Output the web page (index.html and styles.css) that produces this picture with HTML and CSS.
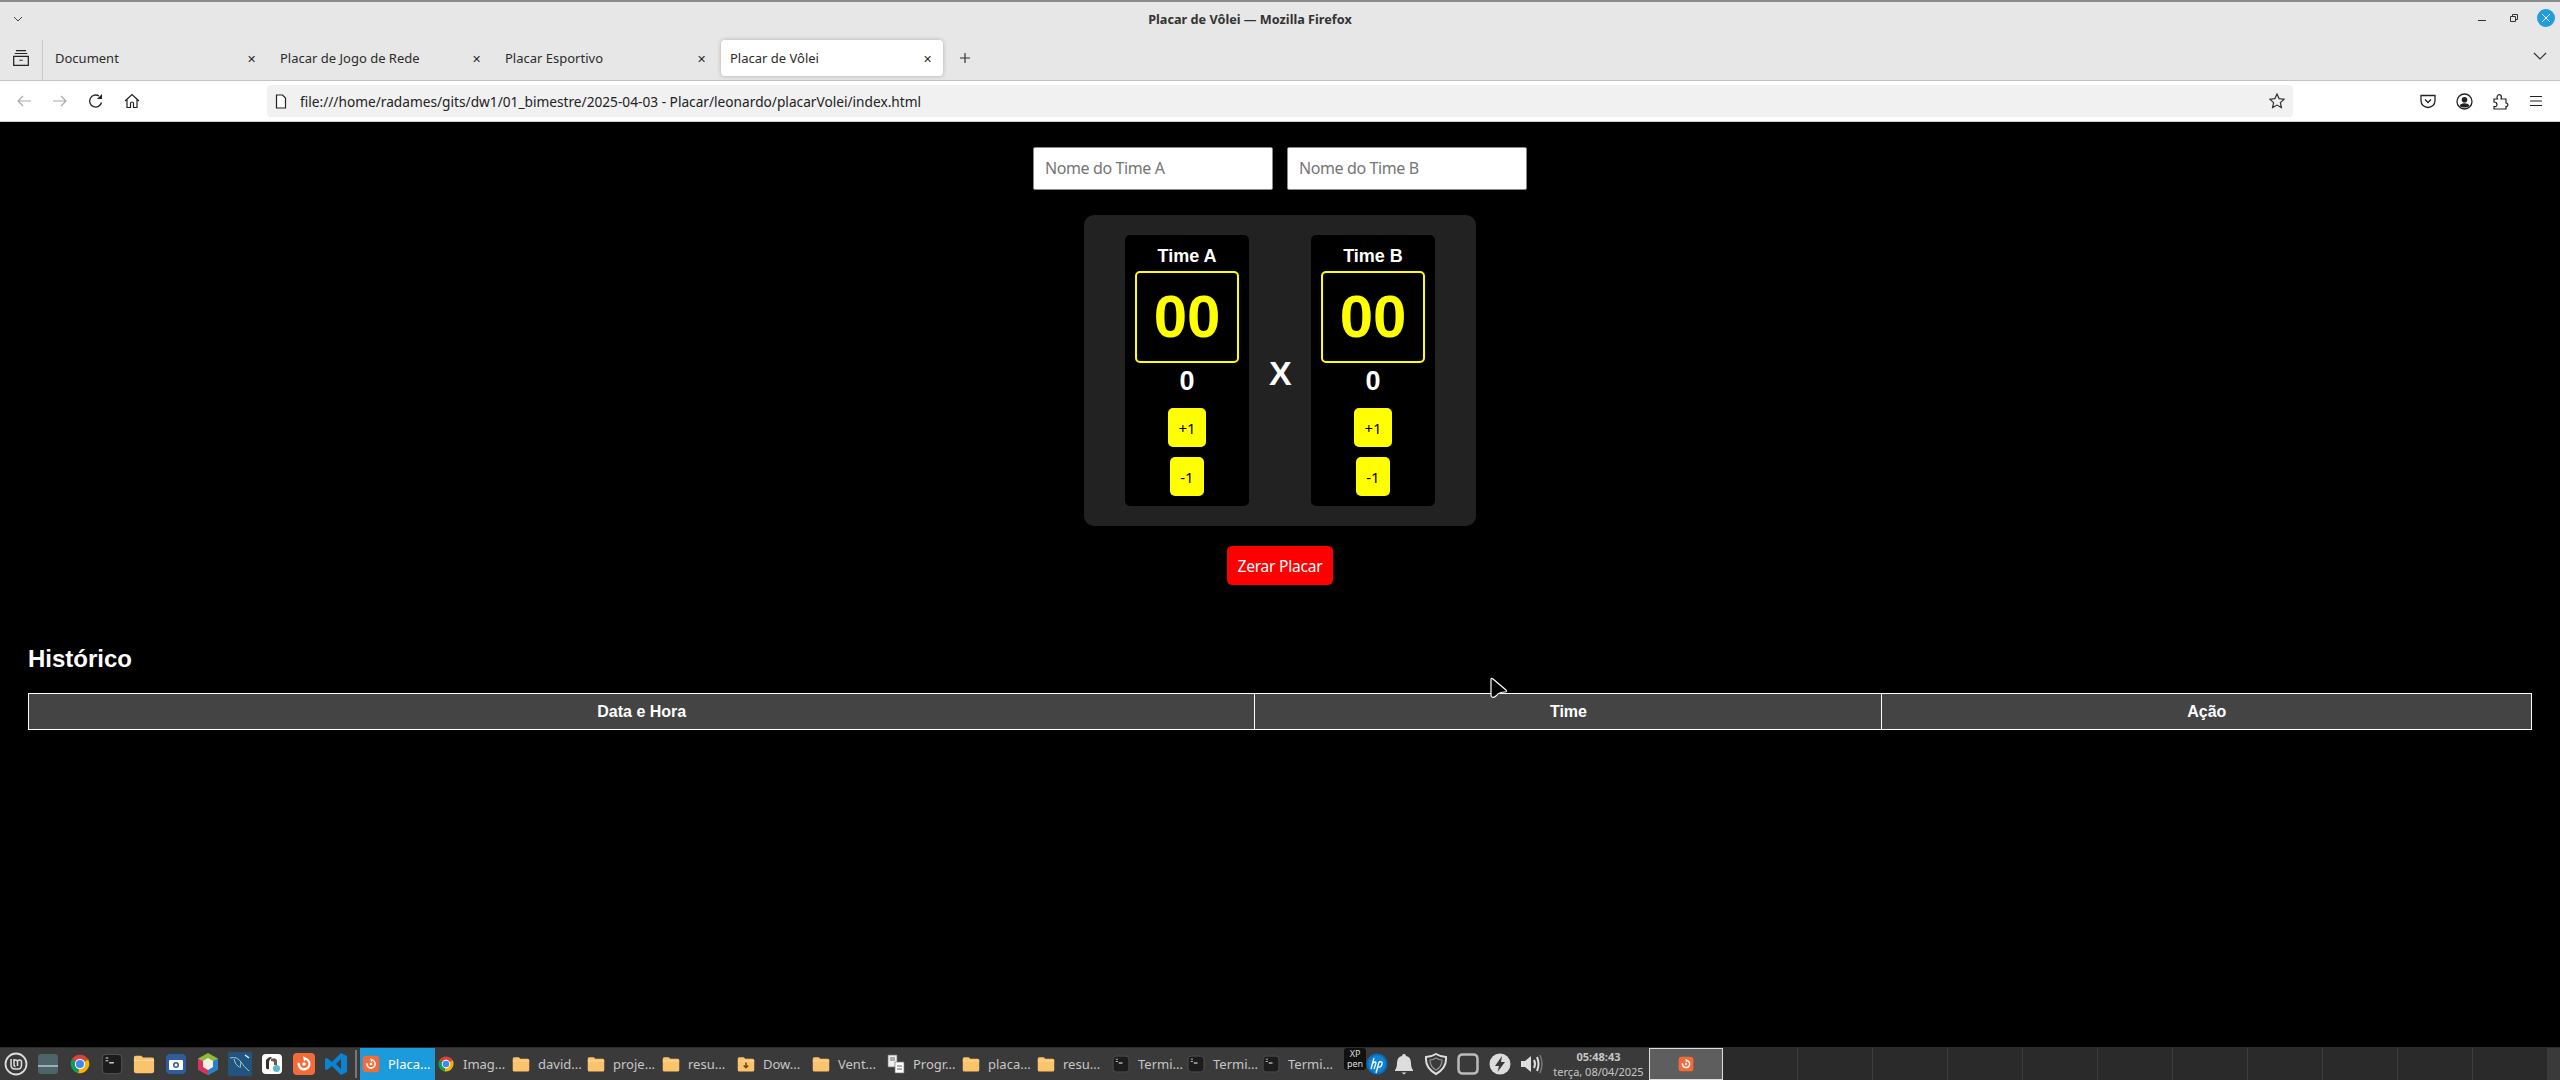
FILE: index.html
```html
<!DOCTYPE html>
<html lang="pt-BR">
<head>
    <meta charset="utf-8">
    <title>Placar de Vôlei</title>
    <link rel="stylesheet" href="styles.css">
</head>
<body>
<svg class="defs" width="0" height="0">
    <symbol id="i-folder" viewBox="0 0 24 24">
        <path d="M1 5q0-2 2-2h6l2 2h10q2 0 2 2v13q0 2-2 2H3q-2 0-2-2z" fill="#fbc36c"/>
        <path d="M1 8h22" stroke="#fde0ae" stroke-width="1"/>
    </symbol>
    <symbol id="i-terminal" viewBox="0 0 24 24">
        <rect x="1.500" y="1.500" width="21" height="21" rx="4" fill="#1c1c1c" stroke="#555"/>
        <path d="M5 5h3v1H5zm0 3h3v1H5z" fill="#ddd"/>
        <path d="M9 10h5v1.400H9z" fill="#eee"/>
    </symbol>
    <symbol id="i-chrome" viewBox="0 0 24 24">
        <path d="M12 12 3 7A10.500 10.500 0 0 1 21 7z" fill="#db4437"/>
        <path d="M12 12 3 7a10.500 10.500 0 0 0 7 15z" fill="#0f9d58"/>
        <path d="M12 12l9-5a10.500 10.500 0 0 1-11 15z" fill="#f4b400"/>
        <circle cx="12" cy="12" r="5.600" fill="#fff"/>
        <circle cx="12" cy="12" r="4.400" fill="#4285f4"/>
    </symbol>
    <symbol id="i-ffdev" viewBox="0 0 24 24">
        <rect x="1" y="1" width="22" height="22" rx="4" fill="#f26b38"/>
        <path d="M12 5.500a6.500 6.500 0 1 1-6.300 5l2.300 1a4.200 4.200 0 1 0 4-3.800z" fill="#fff"/>
        <path d="M11 4l4 2.500-3 3z" fill="#fff"/>
        <circle cx="12" cy="12" r="1.800" fill="#fff"/>
    </symbol>
    <symbol id="i-code" viewBox="0 0 24 24">
        <path d="M17 1l6 3v16l-6 3-9-9-5 4-2-1V7l2-1 5 4zm0 6-5 5 5 5z" fill="#0a84d0"/>
    </symbol>
</svg>

<div class="screen">
    <header class="titlebar">
        <svg class="chevron-left" width="10" height="6" viewBox="0 0 10 6"><path d="M1 1l4 4 4-4" fill="none" stroke="#444"/></svg>
        <span class="window-title">Placar de Vôlei — Mozilla Firefox</span>
        <div class="window-buttons">
            <svg width="12" height="12" viewBox="0 0 12 12"><path d="M2 8.500h8" stroke="#333"/></svg>
            <svg width="12" height="12" viewBox="0 0 12 12"><path d="M2.500 4.500h5v5h-5zM4.500 4.500v-2h5v5h-2" fill="none" stroke="#333"/></svg>
            <span class="close-circle"><svg width="10" height="10" viewBox="0 0 10 10"><path d="M1 1l8 8M9 1l-8 8" stroke="#fff"/></svg></span>
        </div>
    </header>

    <nav class="tabstrip">
        <div class="tab-side">
            <svg width="18" height="18" viewBox="0 0 16 16"><path d="M3.500 1.500h9M2.500 4h11M1.500 6.500h13v8h-13zM6.500 10h3" fill="none" stroke="#222" stroke-width="1.100"/></svg>
        </div>
        <div class="tab"><span class="tab-label">Document</span><span class="tab-x">✕</span></div>
        <div class="tab"><span class="tab-label">Placar de Jogo de Rede</span><span class="tab-x">✕</span></div>
        <div class="tab"><span class="tab-label">Placar Esportivo</span><span class="tab-x">✕</span></div>
        <div class="tab tab-active"><span class="tab-label">Placar de Vôlei</span><span class="tab-x">✕</span></div>
        <svg class="tab-plus" width="12" height="12" viewBox="0 0 12 12"><path d="M6 1v10M1 6h10" stroke="#333" stroke-width="1.200"/></svg>
        <svg class="tab-list" width="14" height="8" viewBox="0 0 14 8"><path d="M1 1l6 6 6-6" fill="none" stroke="#333" stroke-width="1.200"/></svg>
    </nav>

    <div class="toolbar">
        <div class="nav-buttons">
            <svg width="16" height="16" viewBox="0 0 16 16"><path d="M15 8H2M7 3 2 8l5 5" fill="none" stroke="#aaa" stroke-width="1.200"/></svg>
            <svg width="16" height="16" viewBox="0 0 16 16"><path d="M1 8h13M9 3l5 5-5 5" fill="none" stroke="#aaa" stroke-width="1.200"/></svg>
            <svg width="16" height="16" viewBox="0 0 16 16"><path d="M13.500 9.500A6 6 0 1 1 11 3" fill="none" stroke="#222" stroke-width="1.300"/><path d="M14 1v5h-5z" fill="#222"/></svg>
            <svg width="16" height="16" viewBox="0 0 16 16"><path d="M1 8l7-6.500L15 8M3 6.500V14.500h3.500v-4a1.500 1.500 0 0 1 3 0v4H13V6.500" fill="none" stroke="#222" stroke-width="1.200"/></svg>
        </div>
        <div class="urlbar">
            <svg width="12" height="15" viewBox="0 0 12 15"><path d="M1.500 1h6l3 3v10h-9z" fill="#fff" stroke="#222" stroke-width="1.200"/></svg>
            <span class="url-text">file:///home/radames/gits/dw1/01_bimestre/2025-04-03 - Placar/leonardo/placarVolei/index.html</span>
            <svg class="url-star" width="16" height="16" viewBox="0 0 16 16"><path d="M8 1l2.100 4.600 5 .6-3.700 3.400 1 5L8 12.100l-4.400 2.500 1-5L.9 6.200l5-.6z" fill="none" stroke="#333" stroke-width="1.200"/></svg>
        </div>
        <div class="tool-icons">
            <svg width="16" height="16" viewBox="0 0 16 16"><path d="M1 2.500h14V8a7 6.500 0 0 1-14 0z" fill="none" stroke="#222" stroke-width="1.300"/><path d="M5 6.500l3 3 3-3" fill="none" stroke="#222" stroke-width="1.300"/></svg>
            <svg width="17" height="17" viewBox="0 0 17 17"><circle cx="8.500" cy="8.500" r="7.500" fill="none" stroke="#222" stroke-width="1.300"/><circle cx="8.500" cy="6.800" r="2.800" fill="#222"/><path d="M3.500 13q1-2.800 5-2.800t5 2.800q-5 3-10 0z" fill="#222"/></svg>
            <svg width="16" height="17" viewBox="0 0 16 17"><path d="M1 6h3.500q-1-1.500-.2-3Q5.500 1 7.500 2q1.500 1 .5 4H13v4q2 0 1.800 2.500Q14 14 13 13.500V16H1v-2.500q3 .5 3-2T1 9z" fill="none" stroke="#222" stroke-width="1.200"/></svg>
            <svg width="14" height="14" viewBox="0 0 14 14"><path d="M1 2.500h12M1 7h12M1 11.500h12" stroke="#222" stroke-width="1.200"/></svg>
        </div>
    </div>

    <main class="page">
        <div class="team-names">
            <input class="name-input" type="text" placeholder="Nome do Time A">
            <input class="name-input" type="text" placeholder="Nome do Time B">
        </div>

        <section class="board">
            <div class="team">
                <h2 class="team-title">Time A</h2>
                <div class="score">00</div>
                <div class="sets">0</div>
                <button class="btn btn-add">+1</button>
                <button class="btn btn-sub">-1</button>
            </div>
            <div class="versus">X</div>
            <div class="team">
                <h2 class="team-title">Time B</h2>
                <div class="score">00</div>
                <div class="sets">0</div>
                <button class="btn btn-add">+1</button>
                <button class="btn btn-sub">-1</button>
            </div>
        </section>

        <button class="btn-reset">Zerar Placar</button>

        <section class="history">
            <h2 class="history-title">Histórico</h2>
            <table class="history-table">
                <thead>
                    <tr>
                        <th>Data e Hora</th>
                        <th>Time</th>
                        <th>Ação</th>
                    </tr>
                </thead>
            </table>
        </section>

        <svg class="cursor" width="20" height="22" viewBox="0 0 20 22"><path d="M2 2.500q0-2 2-.5l13 11q1.500 2-1 2-6 0-8.500 3.500-2.500 2.500-4.500 1.500-1-.5-1-2z" fill="#000" stroke="#fff" stroke-width="1.200"/></svg>
    </main>

    <footer class="taskbar">
        <div class="launchers">
            <span class="launcher"><svg width="24" height="24" viewBox="0 0 24 24"><circle cx="12" cy="12" r="10.500" fill="none" stroke="#ddd" stroke-width="1.800"/><path d="M7 7v6q0 4 4 4h3q3.500 0 3.500-4V10q0-2-2-2t-2 2v4M10 7v6q0 1.500 1.500 1.500M13.500 10q0-2-2-2t-1.500 2" fill="none" stroke="#ddd" stroke-width="1.500"/></svg></span>
            <span class="launcher"><svg width="22" height="22" viewBox="0 0 22 22"><rect x="1" y="1" width="20" height="20" rx="3" fill="#4f6468"/><path d="M1 13h20" stroke="#dff" stroke-width="1"/></svg></span>
            <span class="launcher"><svg width="22" height="22"><use href="#i-chrome"/></svg></span>
            <span class="launcher"><svg width="22" height="22"><use href="#i-terminal"/></svg></span>
            <span class="launcher"><svg width="22" height="22"><use href="#i-folder"/></svg></span>
            <span class="launcher"><svg width="22" height="22" viewBox="0 0 22 22"><rect x="1" y="1" width="20" height="20" rx="4" fill="#2f5d9b"/><rect x="4" y="7" width="14" height="10" rx="1" fill="#fff"/><circle cx="11" cy="12" r="3" fill="#2f5d9b"/><circle cx="11" cy="12" r="1.500" fill="#fff"/></svg></span>
            <span class="launcher"><svg width="24" height="24" viewBox="0 0 24 24"><path d="M12 1l10 5.500v11L12 23 2 17.500v-11z" fill="#8dbb3c"/><path d="M22 6.500v11L12 23V12z" fill="#2a7fc9"/><path d="M2 6.500v11L12 23V12z" fill="#d9325e"/><path d="M12 6l5 3v6l-5 3-5-3V9z" fill="#f4f0e4"/></svg></span>
            <span class="launcher"><svg width="24" height="24" viewBox="0 0 24 24"><rect width="24" height="24" rx="2" fill="#21557f"/><path d="M2 6q7-2 11 4 3 5 8 9M6 7q1 6 5 8M13 10l-1 6" fill="none" stroke="#a8c4d8" stroke-width="1"/><path d="M17 3l4 3" stroke="#e8eef2" stroke-width="1.500"/></svg></span>
            <span class="launcher"><svg width="22" height="22" viewBox="0 0 22 22"><rect x="1" y="1" width="20" height="20" rx="4" fill="#fff"/><path d="M5 15V7q2-3 5-3l1 1q-3 1-3 5v6q-2 1-3-1z" fill="#3b3027"/><path d="M10 6q4-2 6 1v5h-3v-3q-1-1-3-1z" fill="#6d5a4a"/><circle cx="15.500" cy="15.500" r="3.500" fill="#5fb9c4"/></svg></span>
            <span class="launcher"><svg width="24" height="24"><use href="#i-ffdev"/></svg></span>
            <span class="launcher"><svg width="24" height="24"><use href="#i-code"/></svg></span>
        </div>
        <span class="launch-sep"></span>
        <div class="windows">
            <div class="win win-active"><svg width="18" height="18"><use href="#i-ffdev"/></svg><span>Placa...</span></div>
            <div class="win"><svg width="18" height="18"><use href="#i-chrome"/></svg><span>Imag...</span></div>
            <div class="win"><svg width="18" height="18"><use href="#i-folder"/></svg><span>david...</span></div>
            <div class="win"><svg width="18" height="18"><use href="#i-folder"/></svg><span>proje...</span></div>
            <div class="win"><svg width="18" height="18"><use href="#i-folder"/></svg><span>resu...</span></div>
            <div class="win"><svg width="18" height="18" viewBox="0 0 24 24"><use href="#i-folder" width="24" height="24"/><path d="M12 10v6M9 14l3 3 3-3" fill="none" stroke="#6b4a16" stroke-width="2"/></svg><span>Dow...</span></div>
            <div class="win"><svg width="18" height="18"><use href="#i-folder"/></svg><span>Vent...</span></div>
            <div class="win"><svg width="18" height="20" viewBox="0 0 18 20"><path d="M1 1h9v12H1z" fill="#eee" stroke="#777" stroke-width=".7"/><path d="M8 8h9v11H8z" fill="#fff" stroke="#777" stroke-width=".7"/><path d="M3 4h5M3 6h5M10 12h5M10 15h5" stroke="#666"/></svg><span>Progr...</span></div>
            <div class="win"><svg width="18" height="18"><use href="#i-folder"/></svg><span>placa...</span></div>
            <div class="win"><svg width="18" height="18"><use href="#i-folder"/></svg><span>resu...</span></div>
            <div class="win"><svg width="18" height="20"><use href="#i-terminal"/></svg><span>Termi...</span></div>
            <div class="win"><svg width="18" height="20"><use href="#i-terminal"/></svg><span>Termi...</span></div>
            <div class="win"><svg width="18" height="20"><use href="#i-terminal"/></svg><span>Termi...</span></div>
        </div>
        <div class="tray">
            <span class="tray-item tray-small xppen"><span>XP</span><span>pen</span></span>
            <span class="tray-item tray-small"><svg width="22" height="22" viewBox="0 0 22 22"><circle cx="11" cy="11" r="10.500" fill="#0a6ebd"/><circle cx="11" cy="11" r="8.500" fill="#1283d4"/><path d="M8 5 5 16M7 10q3-2 3 0l-2 6M13 9l-3 11M13 9q4-1 3 2-1 4-4 3" fill="none" stroke="#fff" stroke-width="1.300"/></svg></span>
            <span class="tray-item"><svg width="20" height="22" viewBox="0 0 20 22"><path d="M10 1q2 0 2 2 5 1 5 7 0 5 2 7v1H1v-1q2-2 2-7 0-6 5-7 0-2 2-2z" fill="#ddd"/><path d="M7.500 19.500h5L10 21.500z" fill="#ddd"/></svg></span>
            <span class="tray-item"><svg width="24" height="24" viewBox="0 0 24 24"><path d="M12 2q5 3 10 3 1 11-10 17Q1 16 2 5q5 0 10-3z" fill="none" stroke="#ddd" stroke-width="2"/><path d="M12 6q3 2 6 2 0 7-6 10-6-3-6-10 3 0 6-2z" fill="none" stroke="#999" stroke-width="1.200"/></svg></span>
            <span class="tray-item"><svg width="22" height="22" viewBox="0 0 22 22"><path d="M6 1.500h10q4.500 0 4.500 4.500v10q0 4.500-4.500 4.500H6q-4.500 0-4.500-4.500V6Q1.500 1.500 6 1.500z" fill="none" stroke="#bbb" stroke-width="2.500"/></svg></span>
            <span class="tray-item"><svg width="22" height="22" viewBox="0 0 22 22"><circle cx="11" cy="11" r="10.500" fill="#ddd"/><path d="M13 3 6 13h4l-1.500 6L16 9h-4z" fill="#3a3a3a"/></svg></span>
            <span class="tray-item"><svg width="24" height="24" viewBox="0 0 24 24"><path d="M1 9h4l6-5v16l-6-5H1z" fill="#ddd"/><path d="M14 8q2 4 0 8M17 5q3 7 0 14" fill="none" stroke="#ddd" stroke-width="2"/><path d="M20 3q4 9 0 18" fill="none" stroke="#777" stroke-width="1.500"/></svg></span>
        </div>
        <div class="clock">
            <span class="clock-time">05:48:43</span>
            <span class="clock-date">terça, 08/04/2025</span>
        </div>
        <div class="pager pager-on"><svg width="16" height="16"><use href="#i-ffdev"/></svg></div>
        <div class="pager"></div>
        <div class="pager"></div>
        <div class="pager"></div>
        <div class="pager"></div>
        <div class="pager"></div>
        <div class="pager"></div>
        <div class="pager"></div>
        <div class="pager"></div>
        <div class="pager"></div>
        <div class="pager"></div>
        <div class="pager"></div>
    </footer>
</div>
</body>
</html>
```

FILE: styles.css
```css
* {
    box-sizing: border-box;
}

html, body {
    margin: 0;
    height: 100%;
    overflow: hidden;
    background: #000;
}

.defs {
    position: absolute;
}

.screen {
    display: flex;
    flex-direction: column;
    height: 1080px;
    font-family: "Noto Sans", sans-serif;
}

/* browser window top */
.titlebar {
    position: relative;
    flex: 0 0 38px;
    display: flex;
    align-items: center;
    justify-content: center;
    padding: 0 60px 2px 0;
    background: #e7e7e7;
    border-top: 2px solid #8c8c8c;
}

.chevron-left {
    position: absolute;
    left: 13px;
    top: 14px;
}

.window-title {
    font-size: 12.700px;
    font-weight: 700;
    color: #333;
}

.window-buttons {
    position: absolute;
    right: 5px;
    top: 7px;
    display: flex;
    align-items: center;
    gap: 20px;
}

.close-circle {
    display: flex;
    align-items: center;
    justify-content: center;
    width: 18px;
    height: 18px;
    margin-left: -3px;
    border-radius: 50%;
    background: #1f9ede;
}

.tabstrip {
    position: relative;
    flex: 0 0 43px;
    display: flex;
    align-items: flex-start;
    padding-top: 2px;
    background: #e7e7e7;
    border-bottom: 1px solid #c4c4c4;
}

.tab-side {
    display: flex;
    align-items: center;
    justify-content: center;
    width: 43px;
    height: 40px;
    border-right: 1px solid #c8c8c8;
    padding-bottom: 4px;
}

.tab {
    display: flex;
    align-items: center;
    justify-content: space-between;
    width: 225px;
    height: 36px;
    padding: 0 12px;
    font-size: 13px;
    color: #2b2b2b;
}

.tab-x {
    font-size: 11px;
}

.tab-active {
    width: 222px;
    margin-left: 3px;
    padding: 0 11px 0 9px;
    background: #fff;
    border-radius: 4px;
    box-shadow: 0 0 4px rgba(0, 0, 0, 0.25);
}

.tab-plus {
    margin: 12px 0 0 16px;
}

.tab-list {
    position: absolute;
    right: 13px;
    top: 14px;
}

.toolbar {
    flex: 0 0 41px;
    display: flex;
    align-items: center;
    background: #fff;
    border-bottom: 1px solid #ccc;
}

.nav-buttons {
    display: flex;
    gap: 20px;
    width: 267px;
    padding-left: 16px;
}

.urlbar {
    display: flex;
    align-items: center;
    gap: 13px;
    width: 2026px;
    height: 32px;
    padding: 0 8px;
    background: #f1f1f1;
    border-radius: 4px;
    font-size: 13.700px;
    color: #222;
}

.url-star {
    margin-left: auto;
}

.tool-icons {
    display: flex;
    align-items: center;
    justify-content: space-between;
    width: 123px;
    margin-left: 127px;
}

/* page */
.page {
    position: relative;
    flex: 1;
    padding-top: 25px;
    background: #000;
    color: #fff;
    font-family: "Liberation Sans", Arial, sans-serif;
}

.team-names {
    display: flex;
    justify-content: center;
    gap: 14px;
}

.name-input {
    width: 240px;
    height: 43px;
    padding: 0 11px 2px;
    border: 1px solid #8a8a8a;
    border-radius: 2px;
    background: #fff;
    font-family: "Noto Sans", sans-serif;
    font-size: 16px;
    letter-spacing: -0.4px;
}

.board {
    display: flex;
    align-items: center;
    justify-content: center;
    gap: 20px;
    width: 392px;
    margin: 25px auto 0;
    padding: 20px 0;
    border-radius: 10px;
    background: #222;
}

.team {
    display: flex;
    flex-direction: column;
    align-items: center;
    width: 124px;
    padding: 11px 10px 10px;
    border-radius: 5px;
    background: #000;
}

.team-title {
    margin: 0;
    font-size: 18px;
    line-height: 21px;
}

.score {
    width: 104px;
    height: 92px;
    margin-top: 4px;
    border: 2px solid #ff0;
    border-radius: 5px;
    color: #ff0;
    font-size: 60px;
    font-weight: 700;
    line-height: 88px;
    text-align: center;
}

.sets {
    margin-top: 3px;
    font-size: 27px;
    font-weight: 700;
    line-height: 30px;
}

.btn {
    height: 39px;
    padding: 0;
    border: none;
    border-radius: 5px;
    background: #ff0;
    color: #000;
    font-family: "Noto Sans", sans-serif;
    font-size: 15px;
}

.btn-add {
    width: 38px;
    margin-top: 12px;
}

.btn-sub {
    width: 34px;
    margin-top: 10px;
}

.versus {
    width: 22px;
    padding-top: 5px;
    font-size: 34px;
    font-weight: 700;
    text-align: center;
}

.btn-reset {
    display: block;
    width: 106px;
    height: 39px;
    margin: 20px auto 0;
    padding: 0;
    border: none;
    border-radius: 5px;
    background: #f00;
    color: #fff;
    font-family: "Noto Sans", sans-serif;
    font-size: 15.500px;
    letter-spacing: -0.2px;
}

.history {
    margin: 0 28px;
}

.history-title {
    margin: 60px 0 0;
    font-size: 24px;
    line-height: 28px;
}

.history-table {
    width: 100%;
    margin-top: 20px;
    border-collapse: collapse;
    table-layout: fixed;
}

.history-table th {
    height: 36px;
    padding: 0;
    border: 1px solid #fff;
    background: #444;
    font-size: 16px;
}

.history-table th:nth-child(1) {
    width: 49%;
}

.history-table th:nth-child(2) {
    width: 25.050%;
}

.cursor {
    position: absolute;
    left: 1489px;
    top: 555px;
}

/* desktop panel */
.taskbar {
    flex: 0 0 33px;
    display: flex;
    align-items: center;
    background: #3a3a3a;
    border-top: 1px solid #2c2c2c;
    font-size: 13px;
    color: #c6c6c6;
}

.launchers {
    display: flex;
}

.launcher {
    display: flex;
    align-items: center;
    justify-content: center;
    width: 32px;
    height: 32px;
}

.launch-sep {
    width: 2px;
    height: 28px;
    margin: 0 3px;
    background: #777;
}

.windows {
    display: flex;
}

.win {
    display: flex;
    align-items: center;
    width: 75px;
    height: 32px;
    padding-left: 2px;
    gap: 8px;
    white-space: nowrap;
}

.win-active {
    background: #1b9bdc;
    color: #fff;
}

.tray {
    display: flex;
    margin-left: 9px;
}

.tray-item {
    display: flex;
    align-items: center;
    justify-content: center;
    width: 32px;
    height: 32px;
}

.tray-small {
    width: 22px;
}

.xppen {
    flex-direction: column;
    height: 22px;
    border-radius: 3px;
    background: #111;
    font-size: 9px;
    line-height: 10px;
    color: #ddd;
}

.clock {
    display: flex;
    flex-direction: column;
    align-items: center;
    width: 101px;
    font-size: 11px;
    line-height: 15px;
    white-space: nowrap;
}

.clock-time {
    font-weight: 700;
}

.pager {
    display: flex;
    align-items: center;
    justify-content: center;
    width: 75px;
    height: 32px;
    background: #2a2a2a;
    border-right: 1px solid #3c3c3c;
}

.pager-on {
    width: 74px;
    border: 1px solid #ddd;
    background: #5e5e5e;
}
```
